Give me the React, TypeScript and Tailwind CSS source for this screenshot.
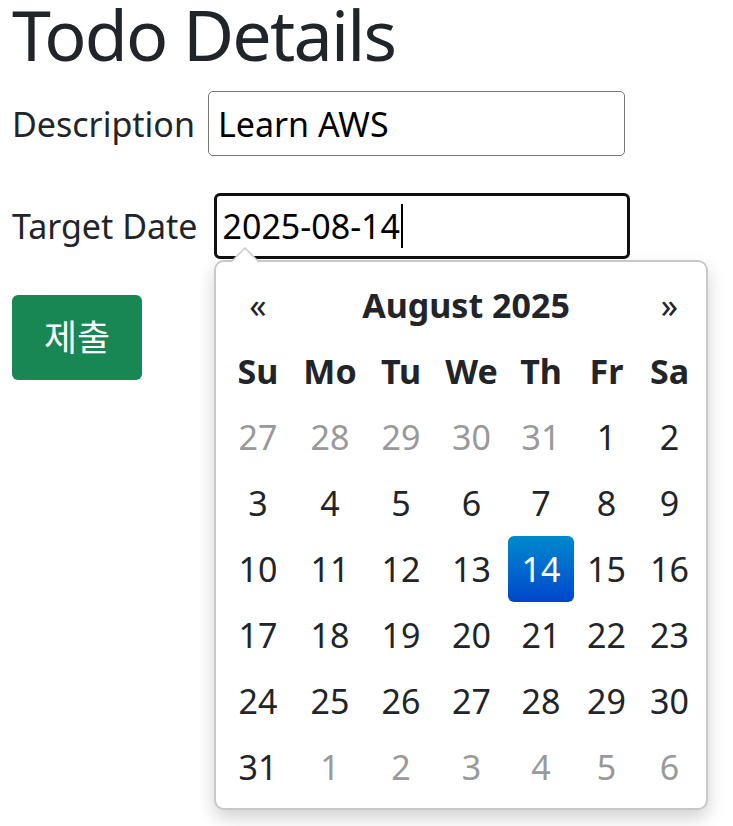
const colWidths = "grid-cols-[72px_72px_70px_71px_68px_63px_63px]";

const days: { d: number; muted?: boolean; active?: boolean }[] = [
  { d: 27, muted: true },
  { d: 28, muted: true },
  { d: 29, muted: true },
  { d: 30, muted: true },
  { d: 31, muted: true },
  ...Array.from({ length: 31 }, (_, i) => ({ d: i + 1, active: i + 1 === 14 })),
  { d: 1, muted: true },
  { d: 2, muted: true },
  { d: 3, muted: true },
  { d: 4, muted: true },
  { d: 5, muted: true },
  { d: 6, muted: true },
];

const weekdays = ["Su", "Mo", "Tu", "We", "Th", "Fr", "Sa"];

function DatePicker() {
  return (
    <div className="absolute left-[214px] top-[260px] w-[494px] rounded-[10px] border-2 border-[#c8c8c8] bg-white px-[6px] pb-[8px] pt-[10px] shadow-[0_8px_18px_rgba(0,0,0,0.18)]">
      {/* arrow */}
      <svg
        className="absolute left-[14px] top-[-15px]"
        width="30"
        height="16"
        viewBox="0 0 30 16"
      >
        <path d="M0 16 L15 1 L30 16 Z" fill="#ffffff" />
        <path d="M1 15 L15 1 L29 15" fill="none" stroke="#c8c8c8" strokeWidth="1.5" />
      </svg>

      <div className={`grid ${colWidths} text-[34px] text-[#212529]`}>
        <div className="flex h-[66px] items-center justify-center">«</div>
        <div className="col-span-5 flex h-[66px] items-center justify-center font-bold">
          August 2025
        </div>
        <div className="flex h-[66px] items-center justify-center">»</div>

        {weekdays.map((w) => (
          <div key={w} className="flex h-[66px] items-center justify-center font-bold">
            {w}
          </div>
        ))}

        {days.map((day, i) => (
          <div key={i} className="flex h-[66px] items-center justify-center">
            {day.active ? (
              <span className="flex h-[66px] w-[66px] items-center justify-center rounded-[6px] bg-gradient-to-b from-[#0088cc] to-[#0044cc] text-white">
                {day.d}
              </span>
            ) : (
              <span className={day.muted ? "text-[#999999]" : ""}>{day.d}</span>
            )}
          </div>
        ))}
      </div>
    </div>
  );
}

export default function App() {
  return (
    <div
      className="relative min-h-[826px] bg-white px-3 text-[#212529]"
      style={{ fontFamily: "'Noto Sans', 'Noto Sans CJK KR', sans-serif" }}
    >
      <h1 className="text-[70px] leading-[68px] font-normal tracking-[-1.8px]">Todo Details</h1>

      <div className="mt-[23px] flex items-center">
        <label className="text-[34px] leading-none">Description</label>
        <input
          readOnly
          value="Learn AWS"
          className="ml-[13px] h-[65px] w-[417px] rounded-[5px] border-[1.5px] border-[#767676] px-[9px] text-[34px] text-black outline-none"
        />
      </div>

      <div className="mt-[37px] flex items-center">
        <label className="text-[34px] leading-none">Target Date</label>
        <div className="ml-[16px] flex h-[66px] w-[416px] items-center rounded-[6px] border-[3px] border-[#101010] px-[6px] text-[34px] text-black">
          2025-08-14
          <span className="ml-[1px] inline-block h-[44px] w-[2px] bg-black" />
        </div>
      </div>

      <button className="mt-[36px] flex h-[85px] w-[130px] items-center justify-center rounded-[6px] bg-[#198754] text-[36px] text-white">
        제출
      </button>

      <DatePicker />
    </div>
  );
}
